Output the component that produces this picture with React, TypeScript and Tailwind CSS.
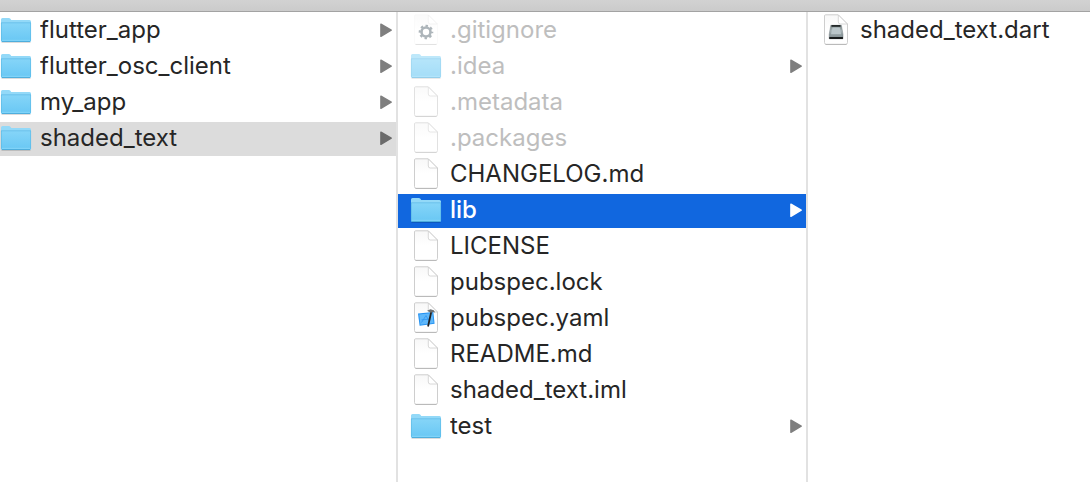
import { useId, useState } from 'react';
import { clsx } from 'clsx';

type IconKind = 'folder' | 'document' | 'settings' | 'xcode' | 'disk';

interface Entry {
  name: string;
  icon: IconKind;
  hidden?: boolean;
}

const projects: Entry[] = [
  { name: 'flutter_app', icon: 'folder' },
  { name: 'flutter_osc_client', icon: 'folder' },
  { name: 'my_app', icon: 'folder' },
  { name: 'shaded_text', icon: 'folder' },
];

const projectFiles: Entry[] = [
  { name: '.gitignore', icon: 'settings', hidden: true },
  { name: '.idea', icon: 'folder', hidden: true },
  { name: '.metadata', icon: 'document', hidden: true },
  { name: '.packages', icon: 'document', hidden: true },
  { name: 'CHANGELOG.md', icon: 'document' },
  { name: 'lib', icon: 'folder' },
  { name: 'LICENSE', icon: 'document' },
  { name: 'pubspec.lock', icon: 'document' },
  { name: 'pubspec.yaml', icon: 'xcode' },
  { name: 'README.md', icon: 'document' },
  { name: 'shaded_text.iml', icon: 'document' },
  { name: 'test', icon: 'folder' },
];

const libFiles: Entry[] = [{ name: 'shaded_text.dart', icon: 'disk' }];

export default function App() {
  const [project, setProject] = useState('shaded_text');
  const [file, setFile] = useState('lib');
  const [source, setSource] = useState('');

  return (
    <div className="flex min-h-screen flex-col bg-white font-['Inter','Liberation_Sans',sans-serif]">
      <header className="h-3 border-b border-[#a3a3a3] bg-linear-to-b from-[#d2d2d2] to-[#cbcbcb]" />
      <main className="grid flex-1 grid-cols-[398fr_410fr_282fr]">
        <Column entries={projects} selected={project} onSelect={setProject} className="border-r-2" />
        <Column entries={projectFiles} selected={file} onSelect={setFile} active className="border-r-2" inset />
        <Column entries={libFiles} selected={source} onSelect={setSource} inset />
      </main>
    </div>
  );
}

interface ColumnProps {
  entries: Entry[];
  selected: string;
  onSelect: (name: string) => void;
  active?: boolean;
  inset?: boolean;
  className?: string;
}

function Column({ entries, selected, onSelect, active, inset, className }: ColumnProps) {
  return (
    <ul className={clsx('flex min-w-0 flex-col gap-0.5 border-[#e2e2e2] pt-0.5', className)}>
      {entries.map((entry) => (
        <li key={entry.name}>
          <Row
            entry={entry}
            selected={entry.name === selected}
            active={active}
            inset={inset}
            onClick={() => onSelect(entry.name)}
          />
        </li>
      ))}
    </ul>
  );
}

interface RowProps {
  entry: Entry;
  selected: boolean;
  active?: boolean;
  inset?: boolean;
  onClick: () => void;
}

function Row({ entry, selected, active, inset, onClick }: RowProps) {
  const highlighted = selected && active;

  return (
    <button
      type="button"
      aria-pressed={selected}
      onClick={onClick}
      className={clsx(
        'flex h-[34px] w-full items-center pr-1 text-left',
        inset && 'pl-3',
        highlighted && 'bg-[#1167df] text-white',
        selected && !active && 'bg-[#dcdcdc]',
        !highlighted && (entry.hidden ? 'text-[#bebebe]' : 'text-[#262626]')
      )}
    >
      <span className={clsx('flex w-8 shrink-0 justify-center', entry.hidden && 'opacity-60')}>
        <EntryIcon kind={entry.icon} />
      </span>
      <span className={clsx('ml-2 min-w-0 flex-1 truncate pb-0.5 text-[24px] leading-8', highlighted && 'font-medium')}>
        {entry.name}
      </span>
      {entry.icon === 'folder' && (
        <svg
          viewBox="0 0 12 16"
          className={clsx('h-4 w-3 shrink-0', highlighted ? 'text-white' : selected ? 'text-[#6b6b6b]' : 'text-[#7f7f7f]')}
          aria-hidden="true"
        >
          <path d="M.9 1.100 11.200 7.200.9 13.300Z" fill="currentColor" stroke="currentColor" strokeWidth="1.4" strokeLinejoin="round" />
        </svg>
      )}
    </button>
  );
}

function EntryIcon({ kind }: { kind: IconKind }) {
  if (kind === 'folder') {
    return <FolderIcon />;
  }
  return <DocumentIcon kind={kind} />;
}

function FolderIcon() {
  const id = useId();

  return (
    <svg viewBox="0 0 32 34" className="h-[34px] w-8" aria-hidden="true">
      <defs>
        <linearGradient id={id} x1="0" y1="0" x2="0" y2="1">
          <stop offset="0" stopColor="#86d5f8" />
          <stop offset="1" stopColor="#68c7f4" />
        </linearGradient>
      </defs>
      <path d="M1.500 28.300h29" stroke="#000" strokeOpacity=".18" />
      <path d="M1 5.500Q1 4 2.500 4h6.300q1 0 1.600.8l.8 1.200H29.500Q31 6 31 7.500V10H1Z" fill="#93d9f8" />
      <path d="M1 8.500h30v18q0 1.500-1.500 1.500h-27Q1 28 1 26.500Z" fill={`url(#${id})`} />
      <path d="M1 8.800h30" stroke="#58b4e0" strokeOpacity=".75" strokeWidth=".8" />
      <path d="M1.400 9v17.500M30.600 9v17.500" stroke="#55b5e2" strokeWidth=".8" strokeOpacity=".7" />
      <path d="M2 26.300h28" stroke="#91dbfb" strokeWidth=".7" />
      <path d="M2 27.500h28" stroke="#4eaedd" strokeWidth="1" />
    </svg>
  );
}

function DocumentIcon({ kind }: { kind: IconKind }) {
  const id = useId();
  const faint = kind === 'settings';

  return (
    <svg viewBox="0 0 32 34" className="h-[34px] w-8" aria-hidden="true">
      <defs>
        <linearGradient id={id} x1="0" y1="0" x2="0" y2="1">
          <stop offset="0" stopColor="#f8f8f8" />
          <stop offset=".5" stopColor="#fff" />
        </linearGradient>
      </defs>
      <path
        d="M5.500.8h12.800l9.200 9.200v18.500q0 1.800-1.800 1.800H6.200q-1.700 0-1.700-1.800V2q0-1.200 1-1.200Z"
        fill={`url(#${id})`}
        stroke={faint ? '#f0f0f0' : '#cecece'}
        strokeWidth={faint ? 0.5 : 1}
      />
      <path d="M5.500 30.500h21" stroke={faint ? '#d0d0d0' : '#bababa'} />
      <path d="M18.300 1v7q0 2 2 2h7Z" fill="#fff" stroke={faint ? '#e9e9e9' : '#cecece'} strokeWidth=".8" />
      {kind === 'settings' && <GearMark />}
      {kind === 'xcode' && <XcodeMark />}
      {kind === 'disk' && <DiskMark />}
    </svg>
  );
}

function GearMark() {
  return (
    <g transform="translate(16 18)" stroke="#77858d" fill="none">
      <circle r="4.500" strokeWidth="2.600" />
      <circle r="6.200" strokeWidth="2.200" strokeDasharray="2.435 2.435" strokeDashoffset="1.217" />
    </g>
  );
}

function XcodeMark() {
  return (
    <g>
      <path d="m8 11.500 15.300-1.500 1.300 11.700-15 2Z" fill="#2391f1" />
      <path d="m9.200 12.400 13.300-1.300 1.100 9.800-13.100 1.800Z" fill="#5fb8fb" />
      <path d="m11.500 20.500 4.500-7 3.500 6.500M11.500 17.800l9-.8" fill="none" stroke="#2f96f3" strokeWidth=".8" />
      <path d="M21.200 10 18.200 23.800" stroke="#252525" strokeWidth="1.800" strokeLinecap="round" />
      <path d="m17 8.800 3.500-1.600 3.300 1.100 1.400 2.200-2-.5-2.200.7Z" fill="#6c7072" />
    </g>
  );
}

function DiskMark() {
  const id = useId();

  return (
    <g>
      <defs>
        <linearGradient id={id} x1="0" y1="0" x2="0" y2="1">
          <stop offset="0" stopColor="#75807f" />
          <stop offset=".4" stopColor="#a9b5b8" />
          <stop offset="1" stopColor="#6b777b" />
        </linearGradient>
      </defs>
      <path d="M10.800 11.300h10.600l1.600 9v4.500H9.200v-4.500Z" fill={`url(#${id})`} stroke="#7a8588" strokeWidth=".5" />
      <path d="M11.500 11h9v1.800h-9Z" fill="#232829" />
      <path d="M12.500 13.500h7.200l1.500 6.800H11Z" fill="#b9c5c9" />
      <path d="M10.200 21h12v1.800h-12Z" fill="#8e9a9e" />
      <path d="M9.300 23h13.600v2H9.300Z" fill="#171b1c" />
    </g>
  );
}
